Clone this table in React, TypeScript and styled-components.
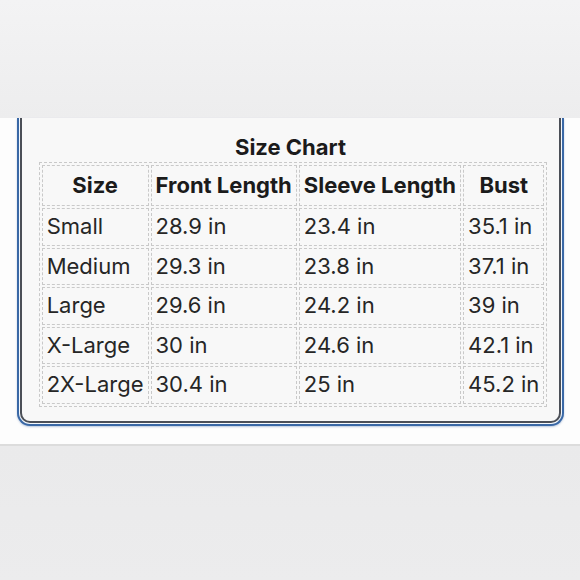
import React from 'react';
import styled, { createGlobalStyle } from 'styled-components';

const GlobalStyle = createGlobalStyle`
  html, body {
    margin: 0;
    padding: 0;
    background: #ececed;
  }
  body {
    font-family: Inter, "Liberation Sans", Arial, sans-serif;
    color: #222;
  }
`;

const Page = styled.div`
  width: 580px;
  height: 580px;
  display: flex;
  flex-direction: column;
  overflow: hidden;
`;

const GreyBand = styled.div<{ h: number; top?: boolean }>`
  height: ${p => p.h}px;
  flex-shrink: 0;
  background: ${p => p.top
    ? 'linear-gradient(180deg, #f3f3f4 0%, #ededee 100%)'
    : 'linear-gradient(180deg, #eaeaeb 0%, #ececed 100%)'};
  border-top: ${p => p.top ? 'none' : '2px solid #dcdcdc'};
`;

const WhiteBand = styled.div`
  height: 326px;
  flex-shrink: 0;
  background: #fdfdfd;
  padding: 0 16px 0 17px;
  box-sizing: border-box;
`;

const OuterFrame = styled.div`
  border: 2px solid #3a68a6;
  border-top: none;
  border-radius: 0 0 13px 13px;
  padding: 0 1px 1px;
  background: #f4f8fc;
  box-shadow: 0 1px 2px rgba(58, 104, 166, 0.35);
`;

const Card = styled.div`
  border: 2px solid #4b4f57;
  border-top: none;
  border-radius: 0 0 10px 10px;
  background: #f8f8f8;
  padding: 15px 0 14px;
  display: flex;
  flex-direction: column;
  align-items: center;
`;

const Title = styled.h2`
  margin: 0 0 1px;
  font-size: 22px;
  line-height: 28px;
  font-weight: 700;
  color: #1b1b1b;
`;

const Table = styled.table`
  border: 1px dashed #c9c9c9;
  border-spacing: 2px;
  border-collapse: separate;
  margin-left: 5px;
`;

const HeadCell = styled.th`
  border: 1px dashed #c9c9c9;
  padding: 0 4px;
  font-size: 22px;
  line-height: 39px;
  font-weight: 700;
  color: #1b1b1b;
  text-align: center;
  white-space: nowrap;
`;

const Cell = styled.td`
  border: 1px dashed #c9c9c9;
  padding: 0 4px;
  font-size: 22px;
  line-height: 35.6px;
  font-weight: 400;
  color: #262626;
  text-align: left;
  white-space: nowrap;
`;

const headers = ['Size', 'Front Length', 'Sleeve Length', 'Bust'];

const rows = [
  ['Small', '28.9 in', '23.4 in', '35.1 in'],
  ['Medium', '29.3 in', '23.8 in', '37.1 in'],
  ['Large', '29.6 in', '24.2 in', '39 in'],
  ['X-Large', '30 in', '24.6 in', '42.1 in'],
  ['2X-Large', '30.4 in', '25 in', '45.2 in'],
];

export default function App() {
  return (
    <Page>
      <GlobalStyle />
      <GreyBand h={118} top />
      <WhiteBand>
        <OuterFrame>
          <Card>
            <Title>Size Chart</Title>
            <Table>
              <thead>
                <tr>
                  {headers.map(h => <HeadCell key={h}>{h}</HeadCell>)}
                </tr>
              </thead>
              <tbody>
                {rows.map(r => (
                  <tr key={r[0]}>
                    {r.map((c, i) => <Cell key={i}>{c}</Cell>)}
                  </tr>
                ))}
              </tbody>
            </Table>
          </Card>
        </OuterFrame>
      </WhiteBand>
      <GreyBand h={136} />
    </Page>
  );
}
